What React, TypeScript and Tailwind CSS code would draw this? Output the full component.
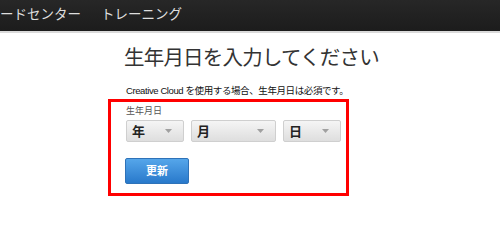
const jp = "font-['Liberation_Sans','Noto_Sans_CJK_JP',sans-serif]";

function Select({ label, width }: { label: string; width: string }) {
  return (
    <div
      className={`flex h-[22px] ${width} items-center justify-between rounded-[2px] border border-[#cfcfcf] bg-gradient-to-b from-[#f5f5f5] to-[#dedede] pl-[5px] pr-[11px]`}
    >
      <span className="text-[13px] font-bold leading-none text-[#222]">{label}</span>
      <svg width="7" height="4" viewBox="0 0 7 4">
        <path d="M0 0h7L3.5 4z" fill="#a0a0a0" />
      </svg>
    </div>
  );
}

export default function App() {
  return (
    <div className={`h-[250px] w-[500px] overflow-hidden bg-white ${jp}`}>
      <header className="flex h-[33px] items-center gap-[20px] border-b-2 border-[#dadada] bg-gradient-to-b from-[#272727] to-[#1c1c1c] pb-px text-[13.5px] text-[#dedede]">
        <span>ードセンター</span>
        <span>トレーニング</span>
      </header>

      <main className="pt-[11px]">
        <h1 className="ml-[124px] text-[20.5px] leading-[28px] font-normal tracking-[-0.8px] text-[#333]">
          生年月日を入力してください
        </h1>
        <p className="mt-[13px] ml-[126px] text-[9.5px] leading-[12px] tracking-[-0.4px] text-[#111]">
          Creative Cloud を使用する場合、生年月日は必須です。
        </p>

        <div className="mt-[2px] ml-[108px] w-[241px] border-[3px] border-[#ff0000] pt-[3px] pb-[9px] pl-[15px]">
          <div className="text-[9px] leading-[12px] text-[#555]">生年月日</div>
          <div className="mt-[3px] flex gap-[7px]">
            <Select label="年" width="w-[58px]" />
            <Select label="月" width="w-[85px]" />
            <Select label="日" width="w-[58px]" />
          </div>
          <button className="mt-[16px] -ml-px flex h-[26px] w-[64px] items-center justify-center rounded-[2px] border border-[#2e72b8] bg-gradient-to-b from-[#55a6ea] to-[#2879cb] text-[11px] font-bold text-white">
            更新
          </button>
        </div>
      </main>
    </div>
  );
}
